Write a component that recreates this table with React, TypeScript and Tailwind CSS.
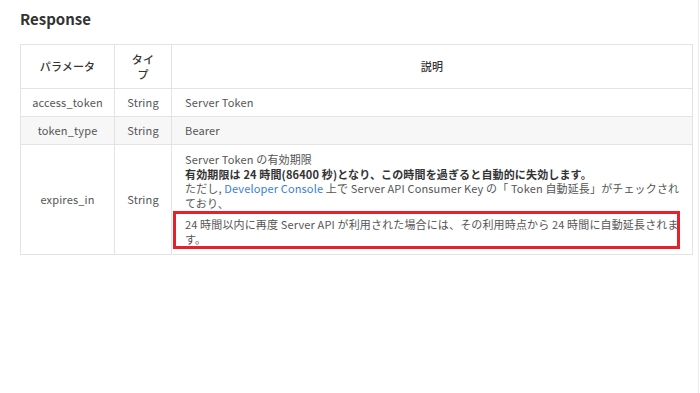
import React from "react";

const FONT = {
  fontFamily: '"Noto Sans CJK JP", "Noto Sans", sans-serif',
};

type Row = {
  name: string;
  type: string;
  desc: React.ReactNode;
  shaded?: boolean;
  tall?: boolean;
};

const ROWS: Row[] = [
  { name: "access_token", type: "String", desc: "Server Token" },
  { name: "token_type", type: "String", desc: "Bearer", shaded: true },
  {
    name: "expires_in",
    type: "String",
    tall: true,
    desc: (
      <div className="relative">
        <p>
          Server Token の有効期限
          <br />
          <b className="font-bold text-[#333]">
            有効期限は 24 時間(86400 秒)となり、この時間を過ぎると自動的に失効します。
          </b>
          <br />
          ただし, <span className="text-[#3b7dd8]">Developer Console</span> 上で
          Server API Consumer Key の「 Token 自動延長」がチェックされており、
        </p>
        <p className="mt-[7px]">
          24 時間以内に再度 Server API が利用された場合には、その利用時点から 24
          時間に自動延長されます。
        </p>
        {/* annotation box drawn over the second paragraph */}
        <div className="pointer-events-none absolute -left-[12px] right-0 -bottom-[3px] h-[38px] border-[3px] border-[#e8202a]" />
      </div>
    ),
  },
];

export default function App() {
  return (
    <div
      className="h-[393px] w-[699px] border-r border-[#ececec] bg-white px-5 pt-[9px] text-[#555]"
      style={FONT}
    >
      <h2 className="text-[15px] font-bold leading-5 text-[#333]">Response</h2>
      <table className="mt-[15px] w-[673px] table-fixed border-collapse text-[11px] leading-[14.5px] tracking-[0.15px]">
        <colgroup>
          <col className="w-[94px]" />
          <col className="w-[57px]" />
          <col />
        </colgroup>
        <thead>
          <tr className="h-[44px] text-[#333]">
            <th className="border border-[#e3e3e3] px-3 font-medium">パラメータ</th>
            <th className="border border-[#e3e3e3] px-3 font-medium">タイプ</th>
            <th className="border border-[#e3e3e3] px-3 font-medium">説明</th>
          </tr>
        </thead>
        <tbody>
          {ROWS.map((r) => (
            <tr key={r.name} className={r.shaded ? "bg-[#f7f7f7]" : "bg-white"}>
              <td className="h-[28px] border border-[#e3e3e3] px-2 text-center">{r.name}</td>
              <td className="border border-[#e3e3e3] px-2 text-center">{r.type}</td>
              <td
                className={`border border-[#e3e3e3] pl-[13px] pr-[12px] ${
                  r.tall ? "pt-[7px] pb-[8px]" : "py-[6px]"
                }`}
              >
                {r.desc}
              </td>
            </tr>
          ))}
        </tbody>
      </table>
    </div>
  );
}
